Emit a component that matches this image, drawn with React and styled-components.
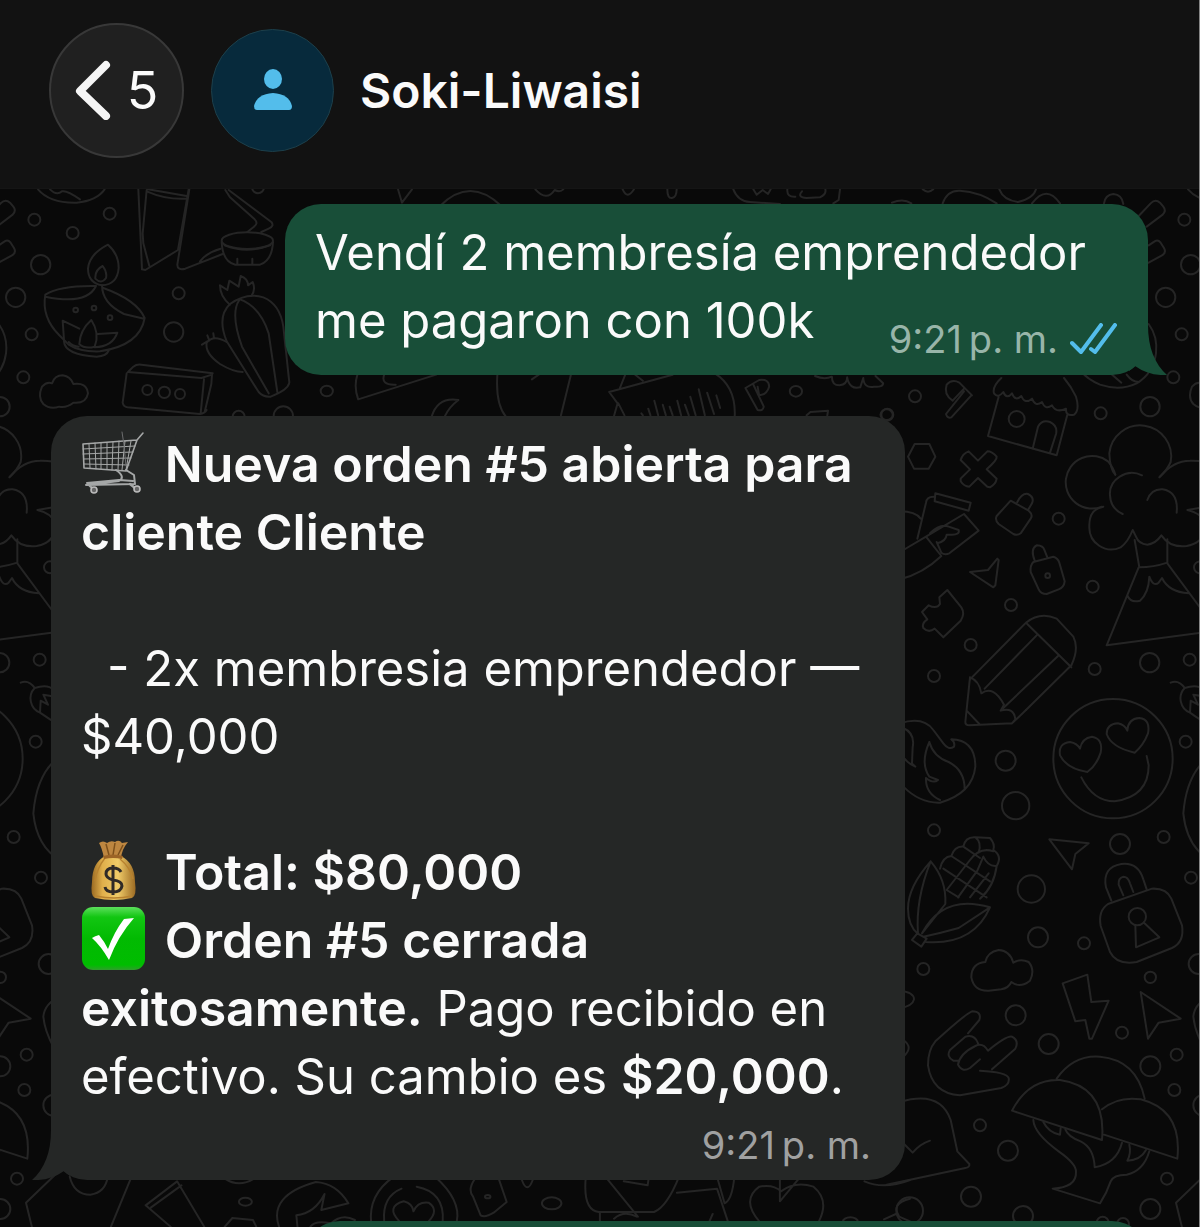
import React from "react";
import styled, { createGlobalStyle } from "styled-components";

const GlobalStyle = createGlobalStyle`
	* {
		box-sizing: border-box;
	}

	body {
		margin: 0;
		background: #090909;
		font-family: Inter, "Noto Sans", sans-serif;
	}
`;

const Spot = ({ list }) => list.map(([x, y, r]) => <circle key={`${x}-${y}`} cx={x} cy={y} r={r} />);

// Doodles that sit on the seam of the wallpaper tile, drawn once on the right and once on the left
const SeamDoodles = () => (
	<g id="seam">
		<g transform="translate(1150 180) scale(.33333)">
			<path d="M156 610 Q164 586 188 586 Q212 590 220 612 Q260 606 264 640 Q258 672 220 668 Q200 684 178 680 Q150 690 130 672 Q112 652 126 620 Q140 604 156 610" />
		</g>
		<g transform="translate(860 180) scale(.33333)">
			<path d="M836 108 L872 70 Q886 56 900 68 L910 80 Q920 92 908 104 L860 140" />
			<path d="M866 196 L884 184 Q894 178 902 188 L912 204 Q920 218 906 226 L866 248" />
			<Spot list={[[973, 119, 18], [992, 254, 29], [917, 352, 29], [965, 463, 18], [940, 592, 18], [870, 680, 29], [722, 700, 18]]} />
			<path d="M866 432 Q894 470 888 520 Q880 580 830 610 Q780 634 720 614 Q680 596 664 574" />
			<path d="M730 560 Q756 584 784 608 M800 584 Q816 606 836 606" />
			<path d="M984 28 Q1020 70 1100 68 Q1160 62 1184 28 M1020 28 Q1040 48 1056 34 Q1070 30 1110 58" />
		</g>
		<g transform="translate(890 380) scale(.33333)">
			<path d="M676 284 Q660 270 658 220 A93 93 0 1 1 842 246 Q832 270 808 292" />
			<path d="M636 380 A79 79 0 1 1 654 244 Q670 262 676 284" />
			<path d="M810 290 Q850 242 900 242 Q970 240 1010 280 M756 286 C710 264 656 298 660 346 Q662 386 698 402 M772 360 Q784 326 818 328 Q866 336 860 398" />
			<path d="M640 380 Q596 388 598 440 A66 66 0 0 0 692 502 Q714 486 728 450 L738 470 Q746 492 772 494 Q798 490 814 466 Q840 504 890 498 Q948 488 946 430 Q936 400 892 390 L940 382" />
			<path d="M734 480 L748 562 Q790 562 832 548 L832 478" />
			<path d="M746 562 L650 796 L934 758 M832 550 L940 696 M712 646 Q722 670 750 662 Q776 640 778 590 Q790 622 806 608 L816 594 Q836 636 896 640" />
			<Spot list={[[930, 562, 18], [779, 848, 29], [899, 839, 18]]} />
		</g>
		<g transform="translate(890 660) scale(.33333)">
			<path d="M842 68 Q866 58 884 84 M884 84 A46 46 0 0 0 900 158 Q930 180 962 196 M884 84 Q940 66 950 110 M900 158 L902 122 L924 134 L910 104 L946 110" />
			<circle cx="887" cy="245" r="18" />
			<path d="M958 290 Q890 340 880 460 Q890 560 960 600" />
			<circle cx="669" cy="296" r="179" />
			<path d="M592 336 Q530 326 510 286 Q504 250 540 246 Q562 250 570 266 Q576 234 606 230 Q640 236 632 278 Q620 316 592 336 Z M734 278 Q664 262 650 222 Q650 192 684 190 Q704 194 712 212 Q714 176 748 174 Q782 178 774 220 Q760 256 734 278 Z" />
			<path d="M574 352 Q610 424 674 424 Q776 410 776 316 L770 288" />
			<Spot list={[[690, 552, 30], [821, 531, 18], [903, 653, 18], [614, 27, 18]]} />
			<path d="M664 722 L648 682 Q636 622 694 612 Q744 606 760 658 L770 688 M700 706 L686 674 Q684 654 700 650 Q714 650 720 670 L730 696" />
			<path d="M654 732 L786 686 Q830 684 844 716 L876 796 Q884 846 846 864 L740 906 Q680 916 660 876 L632 798 Q624 752 654 732 Z" />
			<circle cx="742" cy="770" r="26" />
			<path d="M736 796 L738 862 L808 832 L762 788" />
			<path d="M478 538 L596 550 L556 582 L546 628 Z" />
		</g>
		<g transform="translate(890 940) scale(.33333)">
			<path d="M518 130 L592 104 L604 186 L656 182 L606 296 L598 296 L586 240 L556 244 Z M752 156 L872 236 L806 248 L774 296 Z" />
			<Spot list={[[781, 112, 17], [696, 278, 18], [860, 344, 18], [781, 379, 30], [853, 450, 18], [831, 716, 18], [781, 807, 30], [926, 72, 30], [942, 496, 32]]} />
			<path d="M960 170 Q914 190 910 230 Q914 272 940 320" />
			<path d="M500 416 Q550 344 630 350 Q740 360 764 476 M366 512 Q416 416 510 420 Q650 440 636 600 Z M636 508 Q684 468 752 478 Q878 510 862 656 L642 584" />
			<path d="M430 540 Q432 580 506 634 Q560 672 558 696 Q560 742 488 746 L630 790 Q650 760 662 724 Q670 704 710 704 Q760 694 778 634 M526 568 Q534 590 572 604 Q612 624 614 682 Q680 670 696 608 M460 546 Q476 578 510 584 L512 564 M718 614 Q724 640 712 662 Q752 660 768 630" />
			<path d="M950 700 L858 788 L878 870" />
		</g>
	</g>
);

const Doodles = () => (
	<Wallpaper aria-hidden="true">
		<SeamDoodles />
		<use href="#seam" x="-1150" />

		{/* lamp, cactus, brick */}
		<g transform="translate(0 180) scale(.33333)">
			<Spot list={[[329, 101, 18], [218, 159, 18], [536, 340, 18], [521, 456, 29], [716, 710, 18], [850, 708, 29], [774, 22, 18], [442, 630, 15], [493, 637, 17], [540, 642, 15], [227, 390, 7], [282, 384, 7], [330, 413, 7]]} />
			<path d="M415 28 L426 268 L436 270 L534 210 L566 28 M440 30 L428 160 L430 190 L448 258 M440 34 Q500 60 560 56 M444 28 L560 48" />
			<path d="M568 28 L532 254 Q532 272 556 266 L668 222 M600 244 Q620 218 662 206 M676 30 L690 52 L764 118 Q776 130 762 140 L742 156 M686 30 L814 126 Q824 138 806 146 L784 156" />
			<ellipse cx="742" cy="182" rx="77" ry="25" />
			<path d="M665 186 Q668 246 706 254 L780 254 Q816 242 819 186 M674 196 Q740 222 810 196 M712 236 L712 252 M757 236 L757 252" />
			<path d="M324 194 Q356 222 356 264 Q352 314 306 316 Q264 308 264 266 Q268 222 324 194 Z M308 258 Q322 276 318 294 Q304 314 286 296 Q284 270 308 258 Z" />
			<path d="M288 318 Q180 316 136 344 Q124 412 178 466 L206 494 Q240 516 300 514 Q420 496 434 414 Q410 360 310 324 M136 350 Q260 376 288 318 M306 316 Q306 370 372 402 L432 416" />
			<path d="M192 484 Q194 524 290 530 Q320 528 326 512 M192 480 L188 422 L238 446 M206 486 Q220 500 236 500 M274 420 Q240 450 238 492 Q254 508 284 500 Q300 460 274 420 Z M294 462 L352 458 Q338 500 284 502" />
			<path d="M384 576 L604 594 L636 584 L634 612 L614 696 M384 576 L400 560 Q410 552 424 554 L638 580 M380 580 L368 668 Q370 680 382 682 L600 702 Q614 700 620 690 M612 598 L602 700" />
			<path d="M690 374 Q660 350 660 316 L682 330 L688 302 L716 320 L722 288 Q744 296 744 316 L758 306 Q768 330 754 348" />
			<path d="M690 372 Q740 336 790 352 Q840 372 850 440 L868 608 Q864 630 812 650 Q790 652 776 636 L680 484 Q650 410 690 372 Z M718 360 Q690 400 726 500 L806 640 M720 358 Q780 380 806 460 L832 636" />
			<path d="M680 486 Q640 462 620 488 Q614 520 660 552 Q700 576 728 576 M622 484 L606 494 M628 482 L622 466 M642 474 L640 460" />
		</g>

		<g transform="translate(380 180) scale(.33333)">
			<path d="M54 28 L66 68 L96 28 M180 78 Q270 -12 364 78 M466 28 Q500 66 524 30 Q540 38 550 28 M728 28 Q742 60 762 28 M862 28 Q862 56 876 54 Q890 52 890 28 M1060 28 Q1074 64 1110 66 L1200 72 M1120 28 L1130 44 L1148 30 L1164 42 L1172 28 M1222 28 Q1220 52 1246 50 M1266 34 Q1250 52 1280 54 L1320 52 Q1340 42 1336 28 M1380 28 L1376 60 L1360 70" />
		</g>
		<g transform="translate(860 180) scale(.33333)">
			<path d="M248 70 Q262 30 300 32 Q360 36 410 70 M418 28 Q430 60 474 66 Q520 56 528 28 M516 70 Q560 12 600 70 M732 70 Q736 44 760 42 Q786 44 790 72 M96 68 Q130 54 154 70 M188 28 Q204 42 220 28" />
		</g>

		{/* strip between the two messages */}
		<g transform="translate(300 360) scale(.38265 .33333)">
			<Spot list={[[70, 93, 16], [1296, 94, 16], [1533, 164, 16]]} />
			<path d="M150 44 Q140 80 152 118 L356 44 M220 44 Q210 76 250 74 M344 170 Q360 110 414 120 Q390 140 378 170 M516 40 Q510 130 538 170 M708 44 L682 166 M606 58 L624 44 M836 84 L850 44 M974 44 L808 96 L830 130 L820 170 M832 130 L848 166 M876 44 L896 62 M1084 40 Q1140 80 1136 170" />
			<path d="M892 160 L896 166 M910 146 L916 166 M926 122 L936 166 M948 134 L956 166 M966 140 L974 166 M986 122 L996 166 M1006 134 L1016 166 M1020 110 L1034 166 M1042 88 L1058 166 M1064 98 L1082 162 M1088 106 L1098 144" />
			<path d="M1164 84 L1200 60 Q1226 56 1226 80 Q1220 104 1200 106 L1196 80 M1164 84 L1196 150 Q1210 154 1212 140 L1184 72 M1346 48 Q1370 60 1390 50 Q1390 76 1410 76 Q1430 74 1430 52 Q1436 90 1464 82 L1472 54 Q1474 86 1500 80 Q1524 82 1524 70 L1504 48 M1324 166 L1334 156 L1380 152 L1378 166" />
		</g>

		{/* shop, cross, locks, pencil */}
		<g transform="translate(890 380) scale(.33333)">
			<Spot list={[[75, 49, 18], [380, 117, 24], [506, 416, 18], [608, 620, 18], [363, 675, 18], [242, 795, 18], [-8, 104, 18], [473, 587, 7]]} />
			<path d="M244 46 L184 112 Q172 116 168 102 L222 34 M188 62 Q160 44 170 14 Q186 -4 208 8 L246 46 M188 62 L222 26" />
			<path d="M334 -6 Q306 20 312 40 Q324 56 340 36 Q350 60 366 40 Q376 66 394 48 Q404 74 426 56 Q436 82 456 66 Q466 92 486 76 Q498 100 528 86 Q526 110 552 104 Q570 90 558 50 Q544 20 522 -6 M326 50 L294 168 L500 226 L532 104 M428 206 L444 140 Q456 118 480 126 Q504 138 498 162 L480 218" />
			<path d="M74 192 L118 192 L136 230 L116 266 L72 266 L54 230 Z" />
			<path d="M236 214 L264 242 L292 214 Q306 214 320 230 Q322 240 290 268 L320 296 Q318 312 300 322 L292 320 L264 294 L238 320 Q222 320 212 304 L212 296 L240 268 L212 240 Q218 220 236 214 Z" />
			<path d="M136 340 L242 368 L236 392 L134 364 Z M130 350 Q110 350 108 368 L82 476 M30 394 Q76 394 92 416" />
			<path d="M30 516 L108 470 L222 402 L266 452 L178 520 Q164 526 154 518 L140 486 M108 470 L154 528 Q100 580 30 598 M120 460 Q150 430 176 440 L206 450 Q210 464 186 464 L170 464 Q168 484 142 490" />
			<path d="M362 362 L416 392 Q430 404 422 416 L392 460 Q382 468 370 462 L326 432 Q314 420 320 408 Z M382 366 Q396 338 414 342 Q434 352 426 370 L414 390" />
			<path d="M430 546 L490 530 Q504 534 508 548 L524 604 Q522 622 506 628 L470 642 Q452 642 446 628 L422 576 Q420 556 430 546 Z M434 542 Q420 506 440 496 Q460 496 464 512 L472 532" />
			<path d="M240 576 L294 570 L322 536 L326 540 L316 616 L310 622 Z" />
			<path d="M172 630 L214 682 Q226 700 212 722 L160 772 L134 746 Q116 760 100 744 Q94 730 112 718 L96 696 L116 676 Q140 688 150 672 L148 652 Z" />
			<path d="M240 898 L408 728 Q450 694 500 716 L550 770 Q568 806 544 856 L408 990 M408 728 L544 862 M440 766 L284 926 M504 828 L340 984" />
		</g>

		{/* flame, corn, cloud, hand */}
		<g transform="translate(890 660) scale(.33333)">
			<Spot list={[[132, 48, 18], [347, 302, 30], [377, 437, 41], [132, 511, 18], [424, 687, 41], [444, 832, 30], [582, 850, 18]]} />
			<path d="M240 52 L226 186 Q226 196 238 196 L366 190 L408 150 M240 52 Q268 62 274 100 Q310 74 342 134 L332 152 Q372 140 376 178 L366 190 M230 152 L268 192" />
			<path d="M30 190 Q100 168 130 210 L160 250 Q176 272 192 260 Q196 246 184 238 Q256 240 256 320 Q248 400 150 428 Q90 430 40 380 M40 204 Q76 220 68 262 L66 310 L76 320 Q56 312 40 292 M118 246 Q90 310 118 350 L144 360 Q130 372 108 354 Q106 400 150 420 M118 246 Q130 290 176 306 Q224 330 224 388" />
			<path d="M122 604 Q54 680 54 746 Q54 796 84 822 Q76 720 122 604 Q170 660 166 732 L96 820 Q160 700 300 742 Q250 856 108 846 M300 742 L206 804 Q150 820 100 830 M82 820 L66 840 L94 860 L110 836 Z" />
			<path d="M150 626 Q158 590 184 588 Q194 558 220 560 Q226 530 256 532 L300 534 Q316 552 310 570 Q338 588 320 618 Q312 680 270 716 M184 588 L300 664 M160 626 L290 712 M220 560 L270 594 M170 690 L240 600 Q270 560 310 574 M204 712 L262 632 L280 590 M240 712 L296 640 M256 532 Q276 548 266 578 M280 590 Q294 620 318 618 M170 690 L206 712" />
		</g>
		<g transform="translate(890 940) scale(.33333)">
			<Spot list={[[100, 87, 18], [377, 226, 30], [476, 312, 30], [270, 556, 18], [354, 632, 30], [243, 770, 30], [59, 812, 40], [399, 828, 30], [638, 848, 18], [699, 852, 18]]} />
			<path d="M286 66 Q244 70 244 112 Q252 154 296 152 L334 148 Q356 144 364 126 Q390 146 420 122 Q436 90 416 66 Q392 54 370 68 Q360 32 326 30 Q292 36 286 66 M30 152 Q72 156 72 178 Q68 198 30 204 M40 300 Q72 322 40 350" />
			<path d="M234 280 L268 240 Q276 214 246 214 Q226 222 136 304 Q114 330 114 376 Q126 460 210 466 L334 444 Q360 434 356 414 Q350 396 270 392 M306 388 L376 326 Q388 302 366 290 Q350 286 294 332 Q278 306 256 318 Q210 340 204 374 Q216 398 240 384 L270 358 M180 330 L226 290 Q254 282 264 310 M180 330 Q168 350 190 362 L206 362" />
			<path d="M30 486 Q150 450 182 540 L202 634 L238 672 Q240 682 226 684 L-10 734 M40 610 L68 638 Q90 612 120 602" />
		</g>

		{/* strip under the second message */}
		<g transform="translate(60 1120) scale(.54209 .33333)">
			<Spot list={[[342, 245, 12], [907, 250, 18], [1458, 306, 14], [789, 230, 5]]} />
			<path d="M18 170 Q26 224 56 224 Q84 218 88 170 M132 170 L94 320 M158 256 L216 184 L266 320 M158 256 L204 320 M168 262 L224 196 M304 176 Q330 204 358 176 M304 320 L318 294 L356 300 L362 320" />
			<path d="M404 320 Q384 226 472 186 Q510 190 532 250 L482 270 L488 222 Q470 280 436 286 L438 320 M462 320 Q470 300 500 310 Q520 280 544 300" />
			<path d="M574 310 Q568 224 616 170 M692 170 Q740 240 732 304 M598 304 Q594 230 630 206 M658 200 Q710 216 706 304 M626 304 Q600 260 634 244 Q650 250 652 274 Q660 244 680 248 Q700 270 680 304" />
			<path d="M764 180 Q752 210 762 230 L776 286 Q784 294 800 278 L824 246 L808 170 M852 180 Q862 224 872 180 M970 170 Q964 270 994 276 L1096 276 Q1120 260 1142 170 M1006 170 L1066 290 M1040 184 L1084 196 L1086 174 M1138 218 L1212 206 L1232 304 M1244 170 Q1240 240 1226 250 L1212 170 M996 276 L996 304 M1022 296 Q1040 270 1064 290 M1198 304 L1204 282" />
			<path d="M1290 304 Q1256 240 1290 200 Q1316 192 1330 214 Q1356 182 1390 200 Q1420 240 1400 304 M1328 170 L1328 244 L1366 170 M1484 184 Q1520 210 1568 180 M1568 236 Q1532 250 1548 290 L1568 304 M1520 298 L1542 282" />
		</g>
	</Wallpaper>
);

const CartEmoji = () => (
	<EmojiIcon viewBox="0 0 64 64" role="img" aria-label="carrito">
		<g fill="none" stroke="#a5a7a7" strokeLinecap="round" strokeLinejoin="round">
			<path d="M62 2 L56 9 L45 40 L3 37 L2 13 L56 9" strokeWidth="1.6" />
			<path d="M2 18 L54 15 M2 23 L52 21 M3 28 L50 27 M3 33 L48 34 M8 13 L9 37 M14 12 L15 38 M20 12 L20 38 M26 12 L26 38 M32 11 L31 39 M38 10 L37 39 M44 10 L41 39 M50 10 L45 39" strokeWidth="1" />
			<path d="M45 39 L53 44 L54 53 M35 39 Q45 46 38 50 L5 54 L54 53 M6 52 L38 49 L52 50" strokeWidth="2" />
			<path d="M41 1 L43 14 L45 35" stroke="#6c6d6e" strokeWidth="1" />
			<path d="M8 54 L12 58 M49 53 L54 57" strokeWidth="2.4" />
		</g>
		<circle cx="13" cy="59" r="3" fill="#666" stroke="#bbb" strokeWidth="1.6" />
		<circle cx="56" cy="58" r="3" fill="#666" stroke="#bbb" strokeWidth="1.6" />
	</EmojiIcon>
);

const MoneyBagEmoji = () => (
	<EmojiIcon viewBox="0 0 64 64" role="img" aria-label="bolsa de dinero">
		<defs>
			<linearGradient id="bag" x1="0" x2="1" y1="0" y2="0">
				<stop offset="0" stopColor="#9a6a22" />
				<stop offset=".25" stopColor="#e0af4b" />
				<stop offset=".6" stopColor="#f0cb68" />
				<stop offset="1" stopColor="#9b6a23" />
			</linearGradient>
		</defs>
		<g transform="translate(1 0)">
			<path d="M22 19 Q20 9 17 4 Q21 1 25 4 Q29 1 33 3 Q37 0 40 4 L46 3 Q40 10 39 19 Z" fill="#bd8640" />
			<path d="M24 5 L27 16 M33 4 L31 16 M41 6 L36 16" stroke="#7d501b" strokeWidth="1.5" />
			<path d="M23 17 Q10 24 10 43 Q8 57 13 59 Q32 63 50 59 Q55 57 53 43 Q53 24 39 17 Z" fill="url(#bag)" />
			<path d="M23 19 Q15 29 13 42 M38 20 Q48 28 51 40 M14 57 Q32 61 50 57" fill="none" stroke="#b8822f" strokeWidth="1.4" />
			<path d="M21 17 Q31 14 41 17 L40 20 Q31 18 22 20 Z" fill="#9c6426" />
			<path d="M39 33 Q37 29 31 29 Q24 29 24 35 Q24 39 31 41 Q40 42 40 47 Q39 53 31 53 Q24 53 23 48 M31 26 V56" fill="none" stroke="#2f2a27" strokeWidth="3" />
		</g>
	</EmojiIcon>
);

const CheckEmoji = () => (
	<EmojiIcon viewBox="0 0 64 64" role="img" aria-label="listo">
		<defs>
			<linearGradient id="tile" x1="0" x2="0" y1="0" y2="1">
				<stop offset="0" stopColor="#5ce05c" />
				<stop offset=".16" stopColor="#12c612" />
				<stop offset=".5" stopColor="#02ba02" />
				<stop offset=".92" stopColor="#00bd00" />
				<stop offset="1" stopColor="#2f9e2c" />
			</linearGradient>
		</defs>
		<rect x="1" y="0" width="63" height="63" rx="11" fill="url(#tile)" />
		<path d="M11 31 Q14 29 18 28 Q23 34 27 42 Q33 25 43 12 L53 11 Q37 29 28 53 Q20 39 11 31 Z" fill="#fff" />
	</EmojiIcon>
);

const Bubble = ({ side, inset, children }) => (
	<BubbleBox $side={side} $inset={inset}>
		{children}
		<Tail $side={side} viewBox="0 0 38 50" aria-hidden="true">
			<path d="M0 0 V46 L6 41 Q20 51 38 50 Q19 33 19 0 Z" />
		</Tail>
	</BubbleBox>
);

const App = () => {
	return (
		<Screen>
			<GlobalStyle />
			<Doodles />
			<Header>
				<BackButton type="button" aria-label="Volver, 5 chats sin leer">
					<BackArrow viewBox="0 0 36 60" aria-hidden="true">
						<path d="M31 5 L5 31 L31 56" />
					</BackArrow>
					5
				</BackButton>
				<Avatar>
					<svg width="40" height="42" viewBox="0 0 40 42" aria-hidden="true">
						<ellipse cx="20" cy="10" rx="9" ry="10" />
						<path d="M4 41 Q1 41 1 37 Q4 25 20 24 Q36 25 39 37 Q39 41 36 41 Z" />
					</svg>
				</Avatar>
				<ContactName>Soki-Liwaisi</ContactName>
			</Header>
			<Chat>
				<Bubble side="out" inset="234px">
					Vendí 2 membresía emprendedor me pagaron con 100k
					<Meta $side="out">
						9:21{"\u2009"}p. m.
						<Ticks viewBox="0 0 48 32" aria-label="Leído">
							<path d="M2 20 L11 29 L31 2 M21 26 L25 29 L45 2" />
						</Ticks>
					</Meta>
				</Bubble>
				<Bubble side="in" inset="243px">
					<Line><CartEmoji /> <b>Nueva orden #5 abierta para cliente Cliente</b></Line>
					<Line $indent>- 2x membresia emprendedor — $40,000</Line>
					<Line $tight><MoneyBagEmoji /> <b>Total: $80,000</b></Line>
					<Line $tight>
						<CheckEmoji /> <b>Orden #5 cerrada exitosamente.</b> Pago recibido en efectivo. Su cambio es <b>$20,000</b>.
					</Line>
					<Meta $side="in">9:21{"\u2009"}p. m.</Meta>
				</Bubble>
				<Bubble side="out" inset="253px" />
			</Chat>
		</Screen>
	);
};

export default App;

const Screen = styled.div`
	position: relative;
	display: flex;
	flex-direction: column;
	height: 100vh;
	overflow: hidden;
	background-color: #090909;
	border-right: 1px solid #858585;
	color: #fafafa;
`;

const Wallpaper = styled.svg`
	position: absolute;
	inset: 0;
	width: 100%;
	height: 100%;
	fill: none;
	stroke: #252525;
	stroke-width: 2;
	stroke-linecap: round;
	stroke-linejoin: round;

	path, circle, ellipse {
		vector-effect: non-scaling-stroke;
	}
`;

const Header = styled.header`
	position: relative;
	display: flex;
	align-items: center;
	flex-shrink: 0;
	height: 189px;
	padding: 0 49px 8px;
	background-color: #121212;
	border-bottom: 1px solid #151515;
`;

const BackButton = styled.button`
	display: flex;
	align-items: center;
	justify-content: center;
	gap: 16px;
	width: 135px;
	height: 135px;
	padding: 0;
	border: 2px solid #383838;
	border-radius: 50%;
	background-color: #202020;
	color: #fafafa;
	font-family: inherit;
	font-size: 52px;
	cursor: pointer;
`;

const BackArrow = styled.svg`
	width: 36px;
	height: 60px;
	fill: none;
	stroke: #f5f5f5;
	stroke-width: 8;
	stroke-linecap: round;
	stroke-linejoin: round;
`;

const Avatar = styled.div`
	display: flex;
	align-items: center;
	justify-content: center;
	width: 123px;
	height: 123px;
	margin: 0 26px 0 27px;
	border: 1px solid #1d3f4a;
	border-radius: 50%;
	background-color: #072a3c;

	svg {
		fill: #53bdeb;
	}
`;

const ContactName = styled.h1`
	margin: 0;
	font-size: 48px;
	font-weight: 600;
`;

const Chat = styled.main`
	position: relative;
	display: flex;
	flex-direction: column;
	flex: 1;
	gap: 41px;
	min-height: 0;
	padding: 15px 51px 0;
`;

const BubbleBox = styled.article`
	position: relative;
	flex-shrink: 0;
	align-self: ${({ $side }) => ($side === "out" ? "flex-end" : "flex-start")};
	width: calc(100% - ${({ $inset }) => $inset});
	min-height: 171px;
	padding: 15px 30px ${({ $side }) => ($side === "out" ? "16px" : "1px")};
	border-radius: 36px;
	background-color: ${({ $side }) => ($side === "out" ? "#184e38" : "#252726")};
	font-size: 49px;
	line-height: 68px;

	&::after {
		content: "";
		display: block;
		clear: both;
	}

	b {
		font-size: 50px;
		font-weight: 600;
		line-height: 60px;
	}
`;

const Tail = styled.svg`
	position: absolute;
	bottom: 0;
	width: 38px;
	height: 50px;
	fill: ${({ $side }) => ($side === "out" ? "#184e38" : "#252726")};
	${({ $side }) => ($side === "out" ? "right: -19px;" : "left: -19px; transform: scaleX(-1);")}
`;

const Line = styled.p`
	margin: 0 0 ${({ $tight }) => ($tight ? "0" : "68px")};
	text-indent: ${({ $indent }) => ($indent ? "26px" : "0")};
`;

const EmojiIcon = styled.svg`
	width: 64px;
	height: 64px;
	margin-right: 6px;
	vertical-align: -13px;
`;

const Meta = styled.span`
	float: right;
	display: flex;
	align-items: center;
	gap: 12px;
	margin: ${({ $side }) => ($side === "out" ? "32px 0 0" : "0 4px 0 0")};
	color: ${({ $side }) => ($side === "out" ? "#98b5a9" : "#a0a1a1")};
	font-size: 38px;
	line-height: ${({ $side }) => ($side === "out" ? "40px" : "68px")};
`;

const Ticks = styled.svg`
	width: 48px;
	height: 32px;
	fill: none;
	stroke: #53bdeb;
	stroke-width: 4;
	stroke-linecap: round;
	stroke-linejoin: round;
`;
